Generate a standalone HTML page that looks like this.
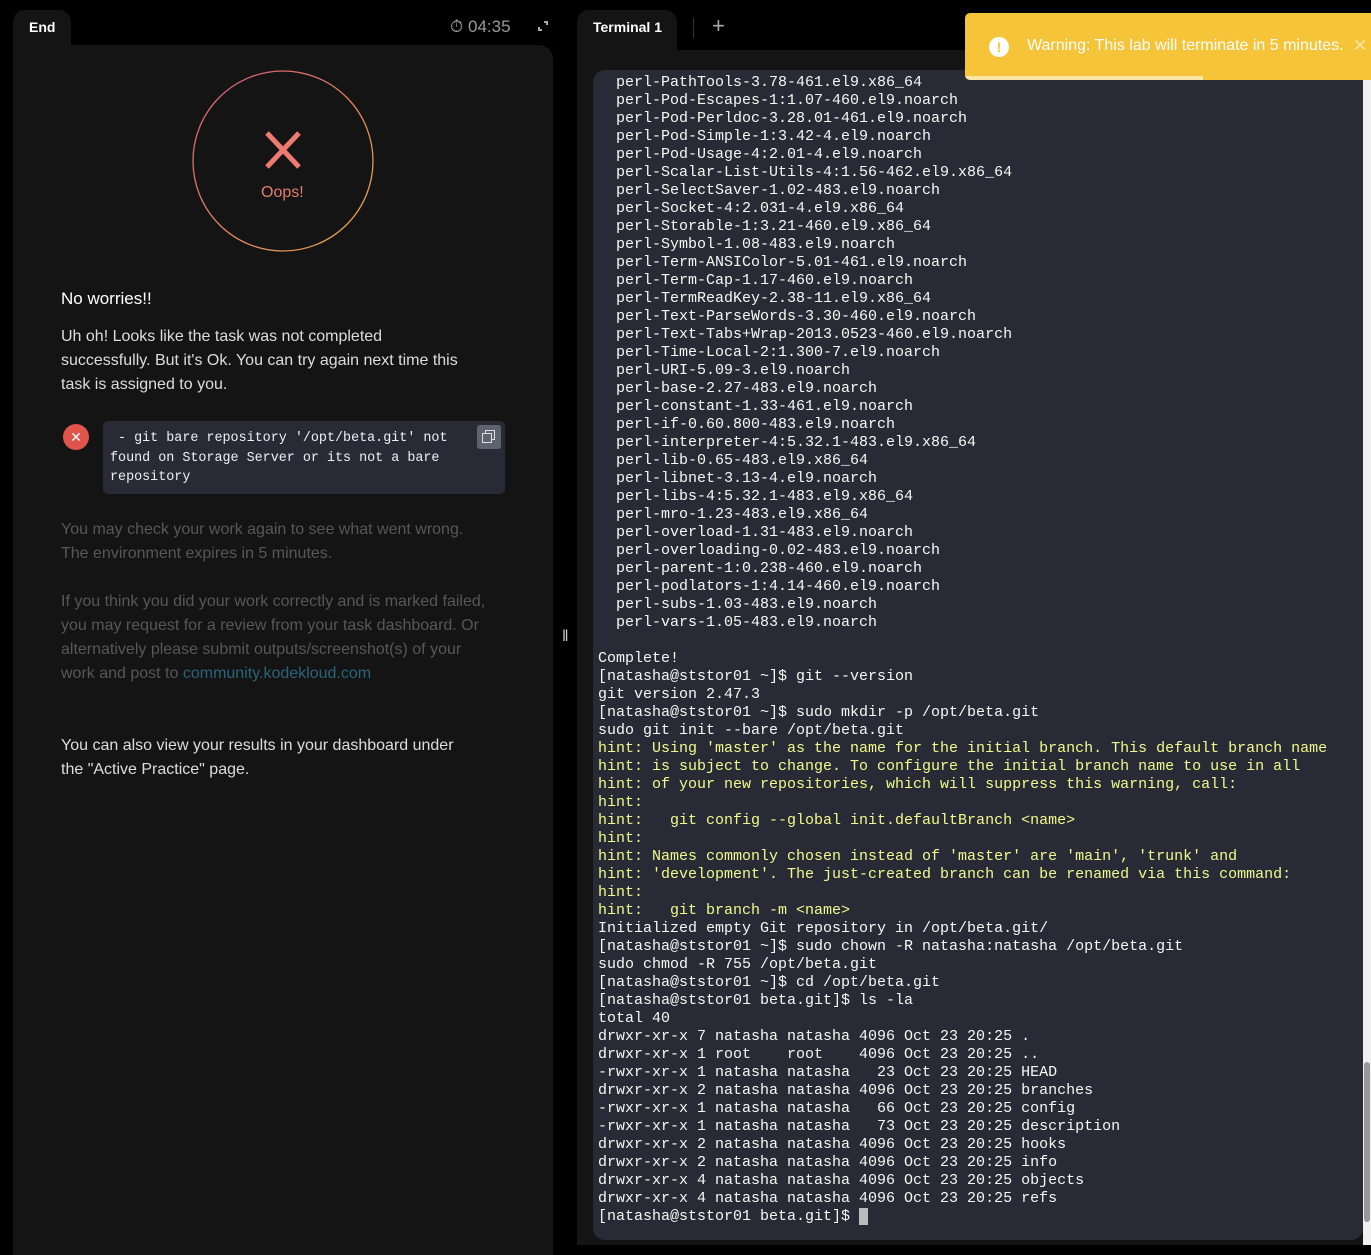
<!DOCTYPE html>
<html><head><meta charset="utf-8"><style>
*{margin:0;padding:0;box-sizing:border-box}
body{width:1371px;height:1245px;background:#000;overflow:hidden;position:relative;font-family:"Liberation Sans",sans-serif}
.tab{position:absolute;background:#141414;border-radius:12px 12px 0 0;color:#fff;font-weight:bold;font-size:14px}
#left{position:absolute;left:13px;top:45px;width:540px;height:1210px;background:#141414;border-radius:0 14px 0 0}
.p{position:absolute;left:61px;font-size:16px;line-height:24px}
#term{position:absolute;left:593px;top:70px;width:770px;height:1170px;background:#282a36;border-radius:12px 0 12px 12px;overflow:hidden}
pre{position:absolute;left:5px;top:4px;font-family:"Liberation Mono",monospace;font-size:15px;line-height:18px;color:#f8f8f2;white-space:pre}
.h{color:#f1fa8c}
</style></head><body>
<div class="tab" style="left:13px;top:10px;width:58px;height:40px;padding:9px 0 0 16px">End</div>
<div style="position:absolute;left:450px;top:17px;color:#9a9a9a;font-size:17px">⏱ 04:35</div>
<div style="position:absolute;left:538px;top:21px;width:10px;height:10px"><div style="position:absolute;right:0;top:0;width:4px;height:4px;border-top:2px solid #aaa;border-right:2px solid #aaa"></div><div style="position:absolute;left:0;bottom:0;width:4px;height:4px;border-bottom:2px solid #aaa;border-left:2px solid #aaa"></div></div>
<div id="left"></div>
<svg style="position:absolute;left:191px;top:69px" width="184" height="184"><defs><linearGradient id="g" x1="0" y1="0" x2="1" y2="1"><stop offset="0" stop-color="#d9597a"/><stop offset="1" stop-color="#e8a94a"/></linearGradient></defs><circle cx="92" cy="92" r="90" fill="none" stroke="url(#g)" stroke-width="1.3"/><path d="M76 64L108 98M108 64L76 98" stroke="#ee7b72" stroke-width="5"/></svg>
<div style="position:absolute;left:261px;top:184px;color:#e27f6d;font-size:16px">Oops!</div>
<div class="p" style="top:287px;color:#fff;font-size:17px">No worries!!</div>
<div class="p" style="top:325px;color:#ddd;width:400px">Uh oh! Looks like the task was not completed successfully. But it's Ok. You can try again next time this task is assigned to you.</div>
<div style="position:absolute;left:63px;top:424px;width:26px;height:26px;border-radius:50%;background:#e0544c;color:#fff;font-size:14px;text-align:center;line-height:26px">✕</div>
<div style="position:absolute;left:103px;top:421px;width:402px;height:73px;background:#282a36;border-radius:5px;font-family:'Liberation Mono',monospace;font-size:13.4px;line-height:19.5px;color:#f0f0f0;padding:8px 45px 0 7px">&nbsp;- git bare repository '/opt/beta.git' not found on Storage Server or its not a bare repository</div>
<div style="position:absolute;left:477px;top:425px;width:24px;height:24px;background:#5f6370;border-radius:3px"><div style="position:absolute;left:8px;top:5px;width:10px;height:10px;border:1.5px solid #ddd"></div><div style="position:absolute;left:5px;top:8px;width:10px;height:10px;border:1.5px solid #ddd;background:#5f6370"></div></div>
<div class="p" style="top:518px;color:#575757;width:430px">You may check your work again to see what went wrong. The environment expires in 5 minutes.</div>
<div class="p" style="top:590px;color:#575757;width:430px">If you think you did your work correctly and is marked failed, you may request for a review from your task dashboard. Or alternatively please submit outputs/screenshot(s) of your work and post to <span style="color:#2a6479">community.kodekloud.com</span></div>
<div class="p" style="top:734px;color:#ddd;width:415px">You can also view your results in your dashboard under the "Active Practice" page.</div>
<div style="position:absolute;left:562px;top:628px;color:#ccc;font-size:16px">‖</div>
<div class="tab" style="left:577px;top:10px;width:100px;height:40px;padding:9px 0 0 16px">Terminal 1</div>
<div style="position:absolute;left:693px;top:18px;width:1px;height:20px;background:#333"></div>
<div style="position:absolute;left:712px;top:13px;color:#aaa;font-size:22px">+</div>
<div style="position:absolute;left:577px;top:50px;width:794px;height:1195px;background:#141414"></div>
<div id="term"><pre>  perl-PathTools-3.78-461.el9.x86_64
  perl-Pod-Escapes-1:1.07-460.el9.noarch
  perl-Pod-Perldoc-3.28.01-461.el9.noarch
  perl-Pod-Simple-1:3.42-4.el9.noarch
  perl-Pod-Usage-4:2.01-4.el9.noarch
  perl-Scalar-List-Utils-4:1.56-462.el9.x86_64
  perl-SelectSaver-1.02-483.el9.noarch
  perl-Socket-4:2.031-4.el9.x86_64
  perl-Storable-1:3.21-460.el9.x86_64
  perl-Symbol-1.08-483.el9.noarch
  perl-Term-ANSIColor-5.01-461.el9.noarch
  perl-Term-Cap-1.17-460.el9.noarch
  perl-TermReadKey-2.38-11.el9.x86_64
  perl-Text-ParseWords-3.30-460.el9.noarch
  perl-Text-Tabs+Wrap-2013.0523-460.el9.noarch
  perl-Time-Local-2:1.300-7.el9.noarch
  perl-URI-5.09-3.el9.noarch
  perl-base-2.27-483.el9.noarch
  perl-constant-1.33-461.el9.noarch
  perl-if-0.60.800-483.el9.noarch
  perl-interpreter-4:5.32.1-483.el9.x86_64
  perl-lib-0.65-483.el9.x86_64
  perl-libnet-3.13-4.el9.noarch
  perl-libs-4:5.32.1-483.el9.x86_64
  perl-mro-1.23-483.el9.x86_64
  perl-overload-1.31-483.el9.noarch
  perl-overloading-0.02-483.el9.noarch
  perl-parent-1:0.238-460.el9.noarch
  perl-podlators-1:4.14-460.el9.noarch
  perl-subs-1.03-483.el9.noarch
  perl-vars-1.05-483.el9.noarch

Complete!
[natasha@ststor01 ~]$ git --version
git version 2.47.3
[natasha@ststor01 ~]$ sudo mkdir -p /opt/beta.git
sudo git init --bare /opt/beta.git
<span class="h">hint: Using 'master' as the name for the initial branch. This default branch name
hint: is subject to change. To configure the initial branch name to use in all
hint: of your new repositories, which will suppress this warning, call:
hint:
hint:   git config --global init.defaultBranch &lt;name&gt;
hint:
hint: Names commonly chosen instead of 'master' are 'main', 'trunk' and
hint: 'development'. The just-created branch can be renamed via this command:
hint:
hint:   git branch -m &lt;name&gt;</span>
Initialized empty Git repository in /opt/beta.git/
[natasha@ststor01 ~]$ sudo chown -R natasha:natasha /opt/beta.git
sudo chmod -R 755 /opt/beta.git
[natasha@ststor01 ~]$ cd /opt/beta.git
[natasha@ststor01 beta.git]$ ls -la
total 40
drwxr-xr-x 7 natasha natasha 4096 Oct 23 20:25 .
drwxr-xr-x 1 root    root    4096 Oct 23 20:25 ..
-rwxr-xr-x 1 natasha natasha   23 Oct 23 20:25 HEAD
drwxr-xr-x 2 natasha natasha 4096 Oct 23 20:25 branches
-rwxr-xr-x 1 natasha natasha   66 Oct 23 20:25 config
-rwxr-xr-x 1 natasha natasha   73 Oct 23 20:25 description
drwxr-xr-x 2 natasha natasha 4096 Oct 23 20:25 hooks
drwxr-xr-x 2 natasha natasha 4096 Oct 23 20:25 info
drwxr-xr-x 4 natasha natasha 4096 Oct 23 20:25 objects
drwxr-xr-x 4 natasha natasha 4096 Oct 23 20:25 refs
[natasha@ststor01 beta.git]$ <span style="background:#bbb"> </span></pre></div>
<div style="position:absolute;left:1363px;top:80px;width:8px;height:1165px;background:#f0f0f0"></div>
<div style="position:absolute;left:1364px;top:1062px;width:6px;height:160px;background:#999;border-radius:3px"></div>
<div style="position:absolute;left:965px;top:13px;width:406px;height:67px;background:#f5c438;border-radius:5px 0 0 5px;overflow:hidden">
<div style="position:absolute;left:0;bottom:0;width:238px;height:4px;background:#fbe6a8"></div>
<div style="position:absolute;left:24px;top:24px;width:20px;height:20px;border-radius:50%;background:#fff;color:#f5c438;font-weight:bold;font-size:14px;text-align:center;line-height:20px">!</div>
<div style="position:absolute;left:62px;top:24px;color:#fff;font-size:16px">Warning: This lab will terminate in 5 minutes.</div>
<div style="position:absolute;left:388px;top:23px;color:#fbe3a0;font-size:17px">✕</div>
</div>
</body></html>
